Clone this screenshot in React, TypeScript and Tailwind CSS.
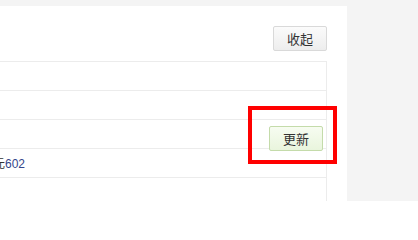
export default function App() {
  const rows = ["", "", "update", "price", ""];

  return (
    <div className="w-[418px] h-[201px] overflow-hidden bg-[#f4f4f4] pt-[6px] relative" style={{ fontFamily: '"Liberation Sans", "Noto Sans CJK SC", sans-serif' }}>
      <div className="w-[347px] h-[195px] bg-white flex flex-col overflow-hidden">
        {/* header */}
        <div className="h-[55px] shrink-0 flex justify-end items-start pt-[20px] pr-[20px]">
          <button className="w-[54px] h-[25px] border border-[#d9d9d9] rounded-[2px] bg-gradient-to-b from-[#fbfbfb] to-[#ededed] text-[13px] text-[#333] leading-none" style={{ fontFamily: '"Noto Sans CJK SC", sans-serif' }}>
            收起
          </button>
        </div>

        {/* table */}
        <div className="w-[327px] shrink-0 border-t border-r border-[#ececec] flex flex-col">
          {rows.map((r, i) => (
            <div key={i} className="h-[29px] shrink-0 border-b border-[#ececec] flex items-center justify-between">
              {r === "price" && (
                <span className="-ml-[7px] text-[12px] text-[#333]">
                  <span style={{ fontFamily: '"Noto Sans CJK SC", sans-serif' }}>元</span>
                  <span className="text-[#34468a]">602</span>
                </span>
              )}
              {r === "update" && (
                <div className="ml-auto self-start pt-[6px] pr-[3px]">
                  <button className="w-[54px] h-[25px] border border-[#c4dbaa] rounded-[2px] bg-gradient-to-b from-[#f7fcf1] to-[#e9f5dd] text-[13px] text-[#333] leading-none" style={{ fontFamily: '"Noto Sans CJK SC", sans-serif' }}>
                    更新
                  </button>
                </div>
              )}
            </div>
          ))}
        </div>
      </div>

      {/* annotation box */}
      <div className="absolute left-[248px] top-[106px] w-[89px] h-[58px] border-4 border-[#ff0000]" />
    </div>
  );
}
